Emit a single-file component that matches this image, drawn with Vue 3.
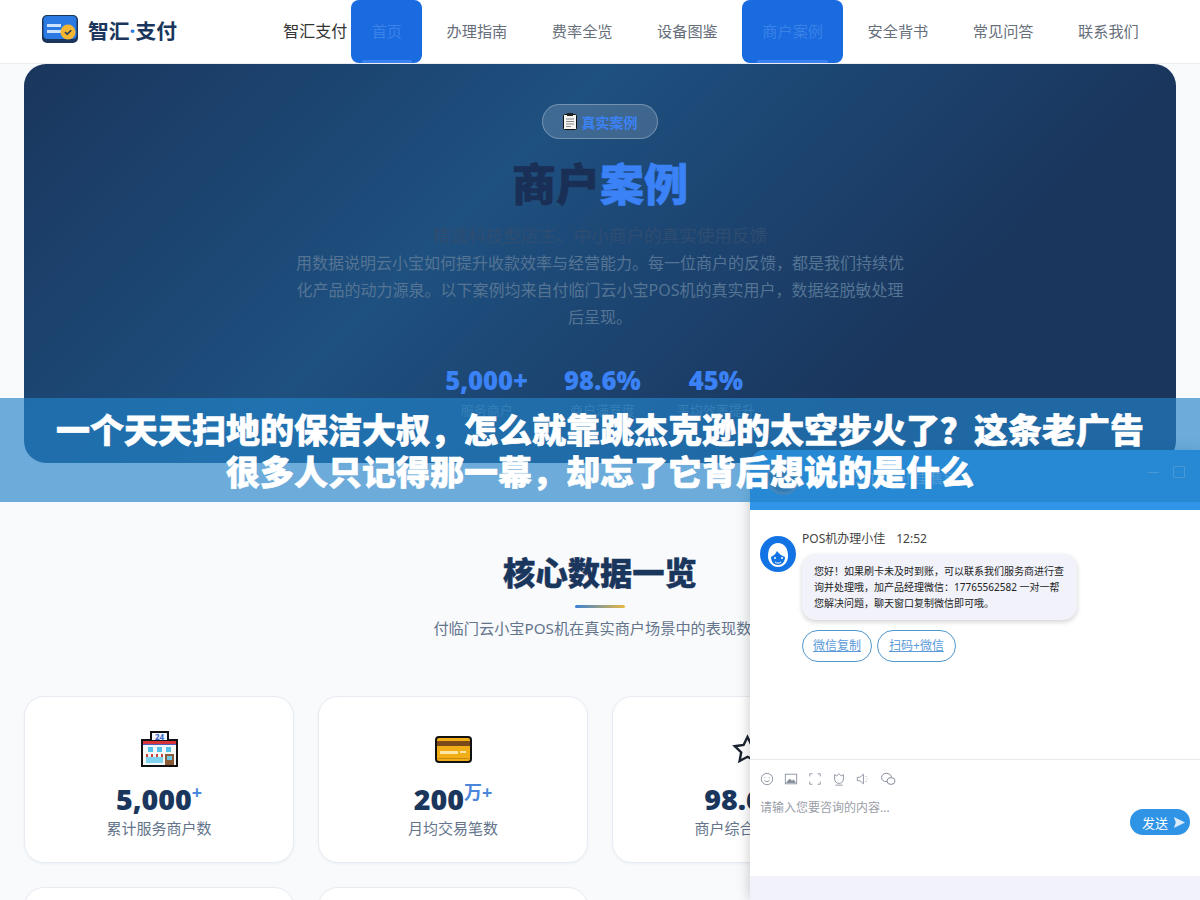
<template>
  <div class="page">
    <header class="topbar">
      <div class="brand">
        <svg class="brand-mark" viewBox="0 0 36 28">
          <rect x="0" y="0" width="36" height="28" rx="5" fill="#1a365d"/>
          <rect x="1.500" y="1" width="33" height="23" rx="4" fill="#2b7ae4"/>
          <rect x="5" y="9" width="14" height="3" fill="#cfe2fb"/>
          <rect x="5" y="15" width="14" height="3" fill="#cfe2fb"/>
          <circle cx="26" cy="17" r="7.500" fill="#f5b731"/>
          <path d="M23 17l2.200 2.200 4-4" fill="none" stroke="#1a365d" stroke-width="1.600"/>
        </svg>
        <span class="brand-name">智汇<i>·</i>支付</span>
      </div>
      <nav class="nav">
        <span class="nav-title">智汇支付</span>
        <a v-for="item in navItems" :key="item.label" class="nav-link" :class="{ active: item.active }">{{ item.label }}</a>
      </nav>
    </header>

    <section class="hero">
      <div class="badge">
        <svg class="badge-icon" viewBox="0 0 14 17">
          <rect x="0.500" y="1.500" width="13" height="15" rx="1" fill="#f4f4f0" stroke="#111"/>
          <rect x="4" y="0" width="6" height="3" fill="#222"/>
          <path d="M3 6h8M3 8.500h8M3 11h8M3 13.500h5" stroke="#888" stroke-width="1"/>
        </svg>
        <span>真实案例</span>
      </div>
      <h1 class="hero-title">商户<em>案例</em></h1>
      <p class="hero-sub">精选科技型店主、中小商户的真实使用反馈</p>
      <p class="hero-text">用数据说明云小宝如何提升收款效率与经营能力。每一位商户的反馈，都是我们持续优化产品的动力源泉。以下案例均来自付临门云小宝POS机的真实用户，数据经脱敏处理后呈现。</p>
      <div class="hero-stats">
        <div v-for="stat in heroStats" :key="stat.label" class="hero-stat">
          <strong>{{ stat.value }}</strong>
          <span>{{ stat.label }}</span>
        </div>
      </div>
    </section>

    <section class="overview">
      <h2>核心数据一览</h2>
      <div class="rule"></div>
      <p class="overview-sub">付临门云小宝POS机在真实商户场景中的表现数据</p>
      <div class="cards">
        <div class="card">
          <svg class="card-icon" viewBox="0 0 37 36" shape-rendering="crispEdges">
            <rect x="9" y="0" width="19" height="11" fill="#111"/>
            <rect x="0" y="8" width="37" height="28" fill="#111"/>
            <rect x="11" y="2" width="15" height="7" fill="#f2f6fc"/>
            <text x="18.500" y="8.500" class="sign-text">24</text>
            <rect x="2" y="10" width="33" height="24" fill="#f4f7f8"/>
            <rect x="2" y="10" width="33" height="3" fill="#d8353a"/>
            <rect x="2" y="13" width="33" height="1" fill="#4a5fc0"/>
            <rect x="7" y="16" width="5" height="5" fill="#54c3ec"/>
            <rect x="16" y="16" width="5" height="5" fill="#54c3ec"/>
            <rect x="25" y="16" width="5" height="5" fill="#54c3ec"/>
            <rect x="5" y="26" width="17" height="6" fill="#7fd3ef"/>
            <rect x="5" y="23" width="2" height="3" fill="#c8443c"/>
            <rect x="10" y="23" width="2" height="3" fill="#c8443c"/>
            <rect x="15" y="23" width="2" height="3" fill="#c8443c"/>
            <rect x="20" y="23" width="2" height="3" fill="#c8443c"/>
            <rect x="24" y="23" width="9" height="11" fill="#8a5a34"/>
            <rect x="26" y="25" width="5" height="4" fill="#6cc6e6"/>
          </svg>
          <div class="card-value">5,000<sup>+</sup></div>
          <div class="card-label">累计服务商户数</div>
        </div>
        <div class="card">
          <svg class="card-icon" viewBox="0 0 37 36">
            <rect x="1" y="6" width="35" height="25" rx="3" fill="#f1ae17" stroke="#111" stroke-width="2"/>
            <rect x="2" y="10" width="33" height="5" fill="#7a4a1a"/>
            <rect x="5" y="20" width="18" height="3" fill="#fbe6a8"/>
            <rect x="25" y="20" width="6" height="2" fill="#fbe6a8"/>
            <rect x="3" y="27" width="31" height="1" fill="#c98a10"/>
          </svg>
          <div class="card-value">200<sup>万+</sup></div>
          <div class="card-label">月均交易笔数</div>
        </div>
        <div class="card">
          <svg class="card-icon" viewBox="0 0 37 36">
            <path d="M18.500 6l3.900 8 8.800 1.200-6.400 6.100 1.600 8.700-7.900-4.200-7.900 4.200 1.600-8.700-6.400-6.100 8.800-1.200z" fill="#fff" stroke="#1b2330" stroke-width="2.400"/>
          </svg>
          <div class="card-value">98.6%</div>
          <div class="card-label">商户综合满意度</div>
        </div>
        <div class="card"></div>
        <div class="card"></div>
        <div class="card"></div>
      </div>
    </section>

    <aside class="chat">
      <div class="chat-head">
        <div class="chat-head-avatar"></div>
        <span class="chat-head-name">POS机办理小佳 售后</span>
        <div class="chat-head-tools">
          <span class="tool-min"></span>
          <span class="tool-max"></span>
        </div>
      </div>
      <div class="chat-body">
        <svg class="agent" viewBox="0 0 36 36">
          <circle cx="18" cy="18" r="18" fill="#1274e4"/>
          <path d="M8 20c0-8 4-13 10-13s10 5 10 13c0 6-4 11-10 11S8 26 8 20z" fill="#fff"/>
          <path d="M11 21c2-1 5-3 6-6 2 3 5 5 8 6 0 5-3 8-7 8s-7-3-7-8z" fill="#1274e4"/>
          <circle cx="15" cy="22" r="1" fill="#fff"/>
          <circle cx="22" cy="22" r="1" fill="#fff"/>
          <path d="M15 26c2 1.500 4 1.500 6 0" stroke="#fff" fill="none"/>
        </svg>
        <div class="msg">
          <div class="msg-meta"><span>POS机办理小佳</span><span>12:52</span></div>
          <div class="bubble">您好！如果刷卡未及时到账，可以联系我们服务商进行查<br>询并处理哦，加产品经理微信：17765562582 一对一帮<br>您解决问题，聊天窗口复制微信即可哦。</div>
          <div class="msg-actions">
            <a>微信复制</a>
            <a>扫码+微信</a>
          </div>
        </div>
      </div>
      <div class="chat-input">
        <div class="chat-tools">
          <svg viewBox="0 0 16 16"><circle cx="8" cy="8" r="6.500"/><path d="M5 9.500c1.500 2 4.500 2 6 0M5.500 6v1M10.500 6v1"/></svg>
          <svg viewBox="0 0 16 16"><rect x="1.500" y="2.500" width="13" height="11"/><path d="M3 12l3.500-4 2.500 2.500 2-1.500 2 3z" fill="#858d9d"/></svg>
          <svg viewBox="0 0 16 16"><path d="M2 5V2h3M11 2h3v3M14 11v3h-3M5 14H2v-3"/></svg>
          <svg viewBox="0 0 16 16"><path d="M3 3l2.500 1.500L8 2l2.500 2.500L13 3v5c0 3-2 5-5 5s-5-2-5-5zM4 15h8"/></svg>
          <svg viewBox="0 0 16 16"><path d="M1.500 6h3l4-3.500v11l-4-3.500h-3zM11.500 4.500v1M12 8h1M11.500 10.500v1"/></svg>
          <svg class="tool-wide" viewBox="0 0 16 16"><ellipse cx="6.500" cy="6.500" rx="5" ry="4.200"/><ellipse cx="11" cy="10" rx="4" ry="3.400" fill="#fff"/></svg>
        </div>
        <div class="chat-compose">
          <span class="placeholder">请输入您要咨询的内容...</span>
          <button class="send">发送
            <svg viewBox="0 0 14 14"><path d="M1 1l12 6-12 6 2-6z" fill="#dcecfb"/></svg>
          </button>
        </div>
      </div>
      <div class="chat-foot"></div>
    </aside>

    <div class="headline">一个天天扫地的保洁大叔，怎么就靠跳杰克逊的太空步火了？这条老广告很多人只记得那一幕，却忘了它背后想说的是什么</div>
  </div>
</template>

<script setup>
const navItems = [
  { label: '首页', active: true },
  { label: '办理指南' },
  { label: '费率全览' },
  { label: '设备图鉴' },
  { label: '商户案例', active: true },
  { label: '安全背书' },
  { label: '常见问答' },
  { label: '联系我们' }
]

const heroStats = [
  { value: '5,000+', label: '服务商户' },
  { value: '98.6%', label: '商户满意度' },
  { value: '45%', label: '平均效率提升' }
]
</script>

<style>
html, body {
  margin: 0;
  height: 900px;
  overflow: hidden;
  background: #f8fafc;
}
</style>

<style scoped>
.page {
  position: relative;
  width: 1200px;
  height: 900px;
  overflow: hidden;
  font-family: "Noto Sans", "Noto Sans CJK SC", sans-serif;
  background: #f8fafc;
}

.topbar {
  display: flex;
  align-items: center;
  height: 63px;
  padding: 0 41px 0 42px;
  background: #fff;
  border-bottom: 1px solid #e9edf2;
}
.brand {
  display: flex;
  align-items: center;
  gap: 10px;
}
.brand-mark {
  width: 36px;
  height: 28px;
  margin-top: -5px;
}
.brand-name {
  margin-top: -2px;
  font-size: 20.8px;
  font-weight: 700;
  line-height: 30px;
  color: #1a365d;
}
.brand-name i {
  font-style: normal;
  color: #2b7ae4;
}
.nav {
  display: flex;
  align-items: stretch;
  gap: 4px;
  margin-left: auto;
  height: 63px;
}
.nav-title {
  font-size: 16px;
  line-height: 63px;
  color: #333;
}
.nav-link {
  position: relative;
  padding: 0 20.25px;
  font-size: 15.2px;
  line-height: 63px;
  color: #666e7a;
}
.nav-link.active {
  background: #1a6be0;
  color: #3b82e8;
  border-radius: 8px;
}
.nav-link.active::after {
  content: "";
  position: absolute;
  left: 15%;
  right: 15%;
  bottom: 0;
  height: 3px;
  border-radius: 2px;
  background: #3b82f0;
}

.hero {
  margin: 0 24px;
  height: 399px;
  box-sizing: border-box;
  padding-top: 40px;
  border-radius: 22px;
  background: linear-gradient(135deg, #1a365d 0%, #1e5080 38%, #1a365d 75%, #1a365d 100%);
  text-align: center;
}
.badge {
  display: inline-flex;
  align-items: center;
  gap: 5px;
  box-sizing: border-box;
  height: 35px;
  padding: 0 19.5px;
  border: 1px solid rgba(255, 255, 255, 0.28);
  border-radius: 18px;
  background: rgba(255, 255, 255, 0.15);
  font-size: 14px;
  font-weight: 700;
  color: #3b82f6;
  vertical-align: top;
}
.badge-icon {
  width: 14px;
  height: 17px;
}
.hero-title {
  margin: 19px 0 0;
  font-size: 44px;
  line-height: 52px;
  font-weight: 900;
  color: #1a2f55;
  -webkit-text-stroke: 0.7px currentColor;
}
.hero-title em {
  font-style: normal;
  color: #3b82f6;
}
.hero-sub {
  margin: 13px 0 0;
  font-size: 17.6px;
  line-height: 24px;
  color: #2f4d70;
}
.hero-text {
  width: 620px;
  margin: 3px auto 0;
  font-size: 16px;
  line-height: 27px;
  color: #557493;
}
.hero-stats {
  display: flex;
  justify-content: center;
  gap: 36px;
  margin-top: 36px;
}
.hero-stat {
  display: flex;
  flex-direction: column;
  align-items: center;
}
.hero-stat strong {
  font-size: 25.6px;
  line-height: 28px;
  font-weight: 900;
  color: #3b82f6;
}
.hero-stat span {
  margin-top: 6px;
  font-size: 13px;
  line-height: 18px;
  color: #557493;
}

.overview {
  padding: 87px 24px 0;
  text-align: center;
}
.overview h2 {
  margin: 0;
  font-size: 32.3px;
  line-height: 44px;
  font-weight: 800;
  color: #1a365d;
  -webkit-text-stroke: 0.4px currentColor;
}
.rule {
  width: 50px;
  height: 3px;
  margin: 11px auto 0;
  border-radius: 2px;
  background: linear-gradient(90deg, #3b82d6, #eab840);
}
.overview-sub {
  margin: 9px 0 0;
  font-size: 15.2px;
  line-height: 22px;
  color: #64748b;
}
.cards {
  display: grid;
  grid-template-columns: repeat(4, 270px);
  gap: 24px;
  margin-top: 57px;
}
.card {
  box-sizing: border-box;
  height: 167px;
  padding-top: 34px;
  border: 1px solid #e8ecf2;
  border-radius: 20px;
  background: #fff;
  box-shadow: 0 1px 3px rgba(26, 54, 93, 0.05);
}
.card-icon {
  display: block;
  width: 37px;
  height: 36px;
  margin: 0 auto;
}
.sign-text {
  font-size: 8px;
  font-weight: 700;
  text-anchor: middle;
  fill: #3566c8;
}
.card-value {
  margin-top: 14px;
  font-size: 28.6px;
  line-height: 36px;
  font-weight: 900;
  color: #1a365d;
}
.card-value sup {
  font-size: 18px;
  line-height: 0;
  font-weight: 700;
  color: #4a86dc;
}
.card-label {
  font-size: 15px;
  line-height: 22px;
  color: #64748b;
}

.chat {
  position: absolute;
  left: 750px;
  top: 450px;
  display: flex;
  flex-direction: column;
  width: 450px;
  height: 450px;
  border-radius: 16px 0 0 0;
  background: #fff;
  box-shadow: 0 0 14px rgba(0, 0, 0, 0.22);
}
.chat-head {
  display: flex;
  align-items: center;
  height: 60px;
  flex: none;
  padding: 0 16px;
  box-sizing: border-box;
  border-radius: 16px 0 0 0;
  background: #3095e8;
}
.chat-head-avatar {
  box-sizing: border-box;
  width: 35px;
  height: 35px;
  margin-top: -6px;
  border: 3px solid rgba(255, 255, 255, 0.25);
  border-radius: 50%;
  background: #54698a;
}
.chat-head-name {
  margin: -6px 0 0 36px;
  font-size: 13px;
  color: #a9cdec;
}
.chat-head-tools {
  display: flex;
  align-items: center;
  gap: 14px;
  margin: -16px -1px 0 auto;
}
.tool-min {
  width: 11px;
  height: 1px;
  background: #8dc2ec;
}
.tool-max {
  width: 10px;
  height: 10px;
  border: 1px solid #8dc2ec;
  border-radius: 1px;
}
.chat-body {
  display: flex;
  gap: 6px;
  height: 250px;
  flex: none;
  box-sizing: border-box;
  padding: 21px 10px 0;
  border-bottom: 1px solid #e8e9ee;
}
.agent {
  width: 36px;
  height: 36px;
  margin-top: 5px;
  flex: none;
}
.msg-meta {
  display: flex;
  gap: 11px;
  font-size: 12px;
  line-height: 16px;
  color: #444;
}
.bubble {
  box-sizing: border-box;
  width: 275px;
  margin-top: 7px;
  padding: 9px 0 9px 12px;
  border-radius: 14px;
  background: #f1f2fa;
  box-shadow: 0 2px 5px rgba(0, 0, 0, 0.18);
  font-size: 10px;
  line-height: 16px;
  color: #222;
  white-space: nowrap;
}
.msg-actions {
  display: flex;
  gap: 5px;
  margin-top: 10px;
}
.msg-actions a {
  padding: 0 10px;
  border: 1px solid #4f97cf;
  border-radius: 16px;
  font-size: 12px;
  line-height: 30px;
  color: #5a9ad8;
  text-decoration: underline;
}
.msg-actions a:last-child {
  padding: 0 11px;
}
.chat-input {
  height: 116px;
  flex: none;
  box-sizing: border-box;
  padding: 11px 10px 0;
}
.chat-tools {
  display: flex;
  align-items: center;
  gap: 10px;
}
.chat-tools svg {
  width: 14px;
  height: 14px;
  fill: none;
  stroke: #858d9d;
  stroke-width: 1;
}
.chat-tools .tool-wide {
  width: 16px;
  height: 16px;
}
.chat-compose {
  display: flex;
  justify-content: space-between;
  margin-top: 8px;
}
.placeholder {
  margin-top: 4px;
  font-size: 12px;
  line-height: 18px;
  color: #9a9ea8;
}
.send {
  display: flex;
  align-items: center;
  gap: 5px;
  width: 60px;
  height: 26px;
  margin-top: 14px;
  padding: 0 0 0 12px;
  border: 0;
  border-radius: 13px;
  background: #2f93e6;
  font-family: inherit;
  font-size: 13px;
  color: #fff;
}
.send svg {
  width: 13px;
  height: 13px;
}
.chat-foot {
  flex: 1;
  background: #f1f2fa;
}

.headline {
  position: absolute;
  left: 0;
  top: 398px;
  box-sizing: border-box;
  width: 1200px;
  height: 104px;
  padding: 11px 50px 0;
  background: rgba(35, 130, 200, 0.66);
  text-align: center;
  font-size: 34px;
  line-height: 42px;
  font-weight: 900;
  color: #fff;
  -webkit-text-stroke: 0.6px #fff;
}
</style>
